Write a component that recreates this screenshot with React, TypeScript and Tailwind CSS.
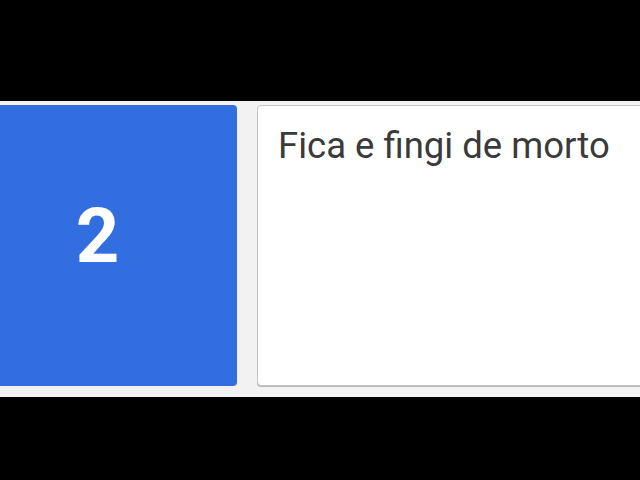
export default function App() {
  return (
    <div className="h-screen w-full overflow-hidden bg-black pt-[101px]" style={{ fontFamily: "Roboto, 'Noto Sans', sans-serif" }}>
      <div className="flex h-[296px] gap-[20px] bg-[#f2f2f3] pt-[4px]">
        <div className="flex h-[281px] w-[237px] shrink-0 items-center justify-center rounded-r-[4px] bg-[#326ee0] pb-[19px] pr-[42px]">
          <span className="text-[76px] font-bold leading-none text-white">2</span>
        </div>
        <div className="-mr-4 h-[281px] flex-1 rounded-l-[4px] border border-[#c4c4c4] bg-white pl-[20px] pt-[22px] shadow-[0_1px_0_#b8b8b8]">
          <p className="text-[36.5px] leading-none text-[#3a3a3a]">Fica e fingi de morto</p>
        </div>
      </div>
    </div>
  );
}
